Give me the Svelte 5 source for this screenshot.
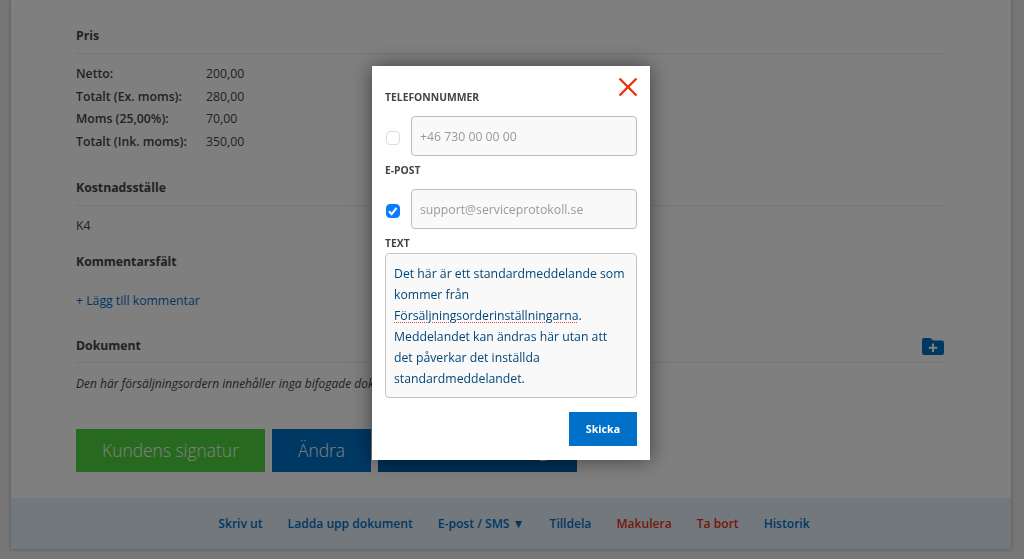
<script>
  const prices = [
    ['Netto:', '200,00'],
    ['Totalt (Ex. moms):', '280,00'],
    ['Moms (25,00%):', '70,00'],
    ['Totalt (Ink. moms):', '350,00']
  ];
  const links = [
    ['Skriv ut', ''],
    ['Ladda upp dokument', ''],
    ['E-post / SMS ▼', ''],
    ['Tilldela', ''],
    ['Makulera', 'red'],
    ['Ta bort', 'red'],
    ['Historik', '']
  ];
</script>

<div class="page">
  <main class="card">
    <div class="body">
      <h3 class="head">Pris</h3>
      <div class="prices">
        {#each prices as [k, v]}
          <div class="row"><b>{k}</b><span>{v}</span></div>
        {/each}
      </div>

      <h3 class="head cost">Kostnadsställe</h3>
      <p class="k4">K4</p>

      <h3 class="plain">Kommentarsfält</h3>
      <a class="add" href="#top">+ Lägg till kommentar</a>

      <div class="head doc">
        <h3>Dokument</h3>
        <svg width="22" height="17" viewBox="0 0 22 17" aria-hidden="true">
          <path fill="#0070c9" d="M2 0h6.500l2.500 2.600h9a2 2 0 0 1 2 2V15a2 2 0 0 1-2 2H2a2 2 0 0 1-2-2V2a2 2 0 0 1 2-2z"/>
          <path fill="#fff" d="M10 5.500h2v3.300h3.300v2H12v3.300h-2v-3.300H6.700v-2H10z"/>
        </svg>
      </div>
      <p class="none">Den här försäljningsordern innehåller inga bifogade dokument.</p>

      <div class="buttons">
        <button class="green">Kundens signatur</button>
        <button class="blue">Ändra</button>
        <button class="navy">Markera som färdig</button>
      </div>
    </div>

    <footer class="foot">
      {#each links as [t, c]}
        <a href="#top" class={c}>{t}</a>
      {/each}
    </footer>
  </main>

  <div class="overlay">
    <div class="modal">
      <button class="close" aria-label="Stäng">
        <svg width="20" height="20" viewBox="0 0 20 20"><path d="M1.500 1.500l17 17M18.500 1.500l-17 17" stroke="#e8330f" stroke-width="2.400" fill="none"/></svg>
      </button>

      <div class="label first">TELEFONNUMMER</div>
      <div class="field">
        <span class="check"></span>
        <div class="input">+46 730 00 00 00</div>
      </div>

      <div class="label second">E-POST</div>
      <div class="field">
        <span class="check on">
          <svg width="14" height="14" viewBox="0 0 14 14"><path d="M3 7.300l2.600 2.800 5-6.200" stroke="#fff" stroke-width="2" fill="none"/></svg>
        </span>
        <div class="input">support@serviceprotokoll.se</div>
      </div>

      <div class="label third">TEXT</div>
      <div class="area">
        Det här är ett standardmeddelande som kommer från <span class="spell">Försäljningsorderinställningarna</span>. Meddelandet kan ändras här utan att det påverkar det inställda standardmeddelandet.
      </div>

      <div class="send"><button>Skicka</button></div>
    </div>
  </div>
</div>

<style>
  :global(body) {
    margin: 0;
    background: #eeeeee;
    font-family: "Open Sans", sans-serif;
    font-size: 12.25px;
    color: #444;
  }
  .page {
    height: 559px;
    padding: 0 13px 0 11px;
    box-sizing: border-box;
    overflow: hidden;
  }
  .card {
    height: 549px;
    background: #fff;
    box-shadow: 0 0 4px rgba(0, 0, 0, 0.3);
    display: flex;
    flex-direction: column;
  }
  .body {
    flex: 1;
    padding: 25px 67px 0 65px;
    line-height: 22px;
  }
  h3 {
    margin: 0;
    font-size: 12.25px;
    font-weight: 700;
    color: #444;
  }
  .head {
    padding-bottom: 6px;
    border-bottom: 1px solid #eaeaea;
    line-height: 22px;
  }
  .prices {
    margin-top: 9px;
  }
  .row {
    height: 22.6px;
    line-height: 22.6px;
    display: flex;
  }
  .row b {
    width: 130px;
    font-weight: 600;
  }
  .cost {
    margin-top: 23.6px;
  }
  .k4 {
    margin: 9px 0 0;
  }
  .plain {
    margin-top: 14px;
  }
  .add {
    display: block;
    margin-top: 17px;
    color: #0070c9;
    text-decoration: none;
  }
  .doc {
    margin-top: 23px;
    padding-bottom: 5px;
    display: flex;
    justify-content: space-between;
    align-items: flex-start;
  }
  .doc svg {
    margin-top: 3px;
  }
  .none {
    margin: 10px 0 0;
    font-size: 12px;
    font-style: italic;
  }
  .buttons {
    margin-top: 34px;
    display: flex;
    gap: 7px;
  }
  .buttons button {
    height: 43px;
    border: 0;
    padding: 0;
    color: #fff;
    font: 300 17.4px "Open Sans", sans-serif;
  }
  .green {
    width: 189px;
    background: #4fd23f;
  }
  .blue {
    width: 99px;
    background: #0070c9;
  }
  .buttons .navy {
    width: 199px;
    padding-right: 12px;
    background: #005ea8;
  }
  .foot {
    height: 51px;
    background: #e6f1f9;
    display: flex;
    justify-content: center;
    align-items: center;
    gap: 25px;
    padding-left: 6px;
    font-size: 12.1px;
    font-weight: 600;
  }
  .foot a {
    color: #0070c9;
    text-decoration: none;
  }
  .foot a.red {
    color: #e8330f;
  }
  .overlay {
    position: fixed;
    inset: 0;
    background: rgba(0, 0, 0, 0.5);
  }
  .modal {
    position: absolute;
    left: 372px;
    top: 66px;
    width: 278px;
    height: 394px;
    box-sizing: border-box;
    padding: 0 13px;
    background: #fff;
    box-shadow: 0 0 20px rgba(0, 0, 0, 0.5);
  }
  .close {
    position: absolute;
    right: 12px;
    top: 11px;
    width: 20px;
    height: 20px;
    padding: 0;
    border: 0;
    background: none;
  }
  .label {
    font-size: 10.35px;
    font-weight: 700;
    line-height: 16px;
    color: #444;
  }
  .first {
    padding-top: 23px;
  }
  .second {
    margin-top: 6px;
  }
  .third {
    margin-top: 6px;
  }
  .field {
    margin-top: 11px;
    display: flex;
    align-items: center;
    gap: 11px;
  }
  .check {
    width: 12px;
    height: 12px;
    margin: 4px 0 0 1px;
    border: 1px solid #dcdcdc;
    border-radius: 4px;
    background: #fff;
    display: flex;
    flex: none;
  }
  .check.on {
    background: #0a7cff;
    border-color: #0a7cff;
  }
  .check.on svg {
    margin: -1px;
  }
  .input {
    flex: 1;
    height: 40px;
    box-sizing: border-box;
    padding: 0 8px;
    line-height: 40px;
    border: 1px solid #bdbdbd;
    border-radius: 4px;
    background: #f9f9f9;
    color: #9a9a9a;
  }
  .area {
    margin-top: 2px;
    height: 145px;
    box-sizing: border-box;
    padding: 9px 8px;
    border: 1px solid #c4c4c4;
    border-radius: 4px;
    background: #f9f9f9;
    color: #00467a;
    line-height: 21px;
  }
  .spell {
    text-decoration: underline dotted #f0404c 1px;
    text-underline-offset: 2px;
  }
  .send {
    margin-top: 14px;
    display: flex;
    justify-content: flex-end;
  }
  .send button {
    width: 68px;
    height: 34px;
    border: 0;
    padding: 0;
    background: #0070c9;
    color: #fff;
    font: 700 10.7px "Open Sans", sans-serif;
  }
</style>
